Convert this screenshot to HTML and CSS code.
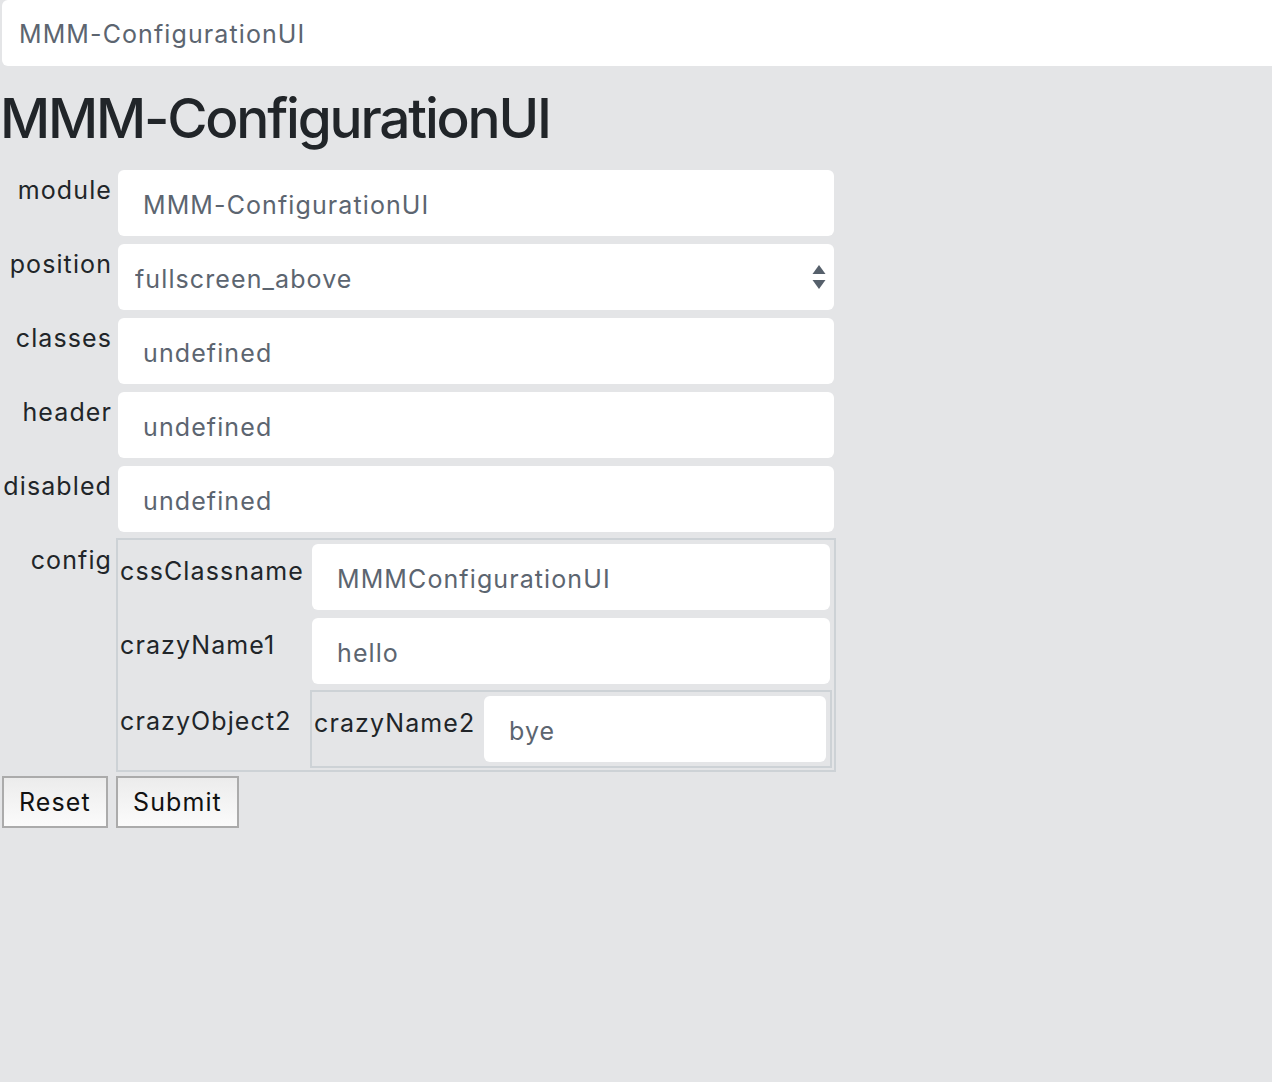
FILE: index.html
```html
<!DOCTYPE html>
<html>
<head>
<meta charset="utf-8">
<title>MMM-ConfigurationUI</title>
<link rel="stylesheet" href="styles.css">
</head>
<body>
<div class="topbar">MMM-ConfigurationUI</div>
<h1 class="title">MMM-ConfigurationUI</h1>
<form class="form">
  <label class="lbl">module</label>
  <div class="cell"><input class="field" value="MMM-ConfigurationUI"></div>

  <label class="lbl">position</label>
  <div class="cell">
    <div class="selwrap">
      <select class="field sel"><option>fullscreen_above</option></select>
      <svg class="arrow" width="14" height="25" viewBox="0 0 14 25"><polygon points="7,0 13.5,9 0.5,9" fill="#56606b"/><polygon points="0.5,15 13.5,15 7,24" fill="#56606b"/></svg>
    </div>
  </div>

  <label class="lbl">classes</label>
  <div class="cell"><input class="field" value="undefined"></div>

  <label class="lbl">header</label>
  <div class="cell"><input class="field" value="undefined"></div>

  <label class="lbl">disabled</label>
  <div class="cell"><input class="field" value="undefined"></div>

  <label class="lbl">config</label>
  <div class="box box-outer">
    <label class="sublbl">cssClassname</label>
    <div class="cell"><input class="field" value="MMMConfigurationUI"></div>
    <label class="sublbl">crazyName1</label>
    <div class="cell"><input class="field" value="hello"></div>
    <label class="sublbl sublbl-obj">crazyObject2</label>
    <div class="box box-inner">
      <label class="sublbl">crazyName2</label>
      <div class="cell"><input class="field" value="bye"></div>
    </div>
  </div>

  <div class="btncell"><button type="reset" class="btn">Reset</button></div>
  <div class="btncell"><button type="button" class="btn">Submit</button></div>
</form>
</body>
</html>
```
FILE: styles.css
```css
html, body {
  margin: 0;
  padding: 0;
}
body {
  background: #e4e5e7;
  font-family: Inter, "Noto Sans", sans-serif;
  color: #212529;
  overflow: hidden;
  height: 1082px;
}
.topbar {
  margin-left: 2px;
  width: 1300px;
  height: 66px;
  box-sizing: border-box;
  background: #fff;
  border-radius: 6px;
  padding-left: 17px;
  line-height: 69px;
  font-size: 25px;
  letter-spacing: 1.1px;
  color: #5c6570;
}
.title {
  margin: 19px 0 17px 0;
  font-size: 55px;
  line-height: 66px;
  font-weight: 500;
  letter-spacing: -2.2px;
  color: #212529;
}
.form {
  display: grid;
  grid-template-columns: 112px 720px;
  column-gap: 4px;
  row-gap: 4px;
}
.lbl {
  text-align: right;
  font-size: 25px;
  letter-spacing: 1.1px;
  line-height: 29px;
  padding-top: 8px;
  white-space: nowrap;
}
.cell {
  padding: 2px;
}
.field {
  display: block;
  width: 100%;
  height: 66px;
  box-sizing: border-box;
  border: none;
  border-radius: 6px;
  background: #fff;
  padding: 3px 25px 0 25px;
  font-family: Inter, "Noto Sans", sans-serif;
  font-size: 25px;
  letter-spacing: 1.1px;
  color: #5c6570;
  outline: none;
  margin: 0;
}
.selwrap {
  position: relative;
}
.sel {
  appearance: none;
  -webkit-appearance: none;
  padding-left: 17px;
}
.arrow {
  position: absolute;
  right: 8px;
  top: 21px;
}
.box {
  border: 2px solid #cdd2d6;
  padding: 2px;
  display: grid;
  column-gap: 4px;
  row-gap: 4px;
}
.box-outer {
  grid-template-columns: 186px 522px;
}
.box-inner {
  grid-template-columns: 164px 346px;
}
.sublbl {
  font-size: 25px;
  letter-spacing: 1.1px;
  line-height: 29px;
  padding-top: 15px;
  white-space: nowrap;
}
.sublbl-obj {
  padding-top: 17px;
}
.btncell {
  display: flex;
}
.btn {
  height: 52px;
  box-sizing: border-box;
  margin-left: 2px;
  padding: 0 15px;
  border: 2px solid #ababab;
  background: linear-gradient(to bottom, #ececec, #fbfbfb);
  font-family: Inter, "Noto Sans", sans-serif;
  font-size: 25px;
  letter-spacing: 1.1px;
  color: #111;
  border-radius: 0;
}
.btncell + .btncell .btn {
  margin-left: 0;
}
```
